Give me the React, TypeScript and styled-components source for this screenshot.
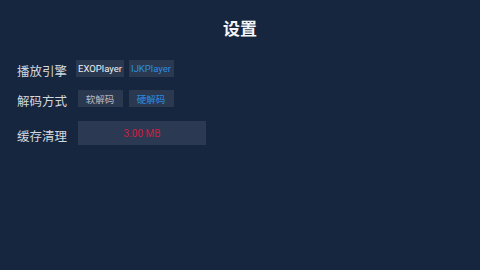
import styled, { createGlobalStyle } from "styled-components";

const Global = createGlobalStyle`
    html, body { margin: 0; padding: 0; background: #17263f; }
    body { font-family: "Roboto", "Noto Sans CJK SC", sans-serif; }
`;

const Page = styled.div`
    width: 480px;
    height: 270px;
    background: #17263f;
    box-sizing: border-box;
    padding: 17px 0 0 17px;
`;

const Title = styled.h1`
    margin: 0 0 20px -17px;
    text-align: center;
    font-family: "Noto Sans CJK SC", sans-serif;
    font-size: 17px;
    font-weight: 700;
    line-height: 22px;
    color: #f2f4f7;
`;

const Row = styled.div<{ $h: number; $mb: number }>`
    display: flex;
    align-items: center;
    height: ${p => p.$h}px;
    margin-bottom: ${p => p.$mb}px;
`;

const Label = styled.div`
    width: 58px;
    font-family: "Noto Sans CJK SC", sans-serif;
    font-size: 12.5px;
    color: #d3d7de;
    padding-top: 4px;
`;

const Options = styled.div`
    display: grid;
    grid-template-columns: 50px 44px;
    column-gap: 4px;
    justify-items: center;
`;

const Option = styled.div<{ $tone: "white" | "gray" | "blue" }>`
    min-width: 45px;
    height: 17px;
    padding: 0 2px;
    box-sizing: border-box;
    display: flex;
    align-items: center;
    justify-content: center;
    background: #2a3850;
    font-size: 9.5px;
    font-family: "Roboto", "Noto Sans CJK SC", sans-serif;
    white-space: nowrap;
    color: ${p => (p.$tone === "blue" ? "#2b8fe0" : p.$tone === "white" ? "#eef0f3" : "#b9bec8")};
`;

const Cache = styled.div`
    margin-left: 3px;
    width: 128px;
    height: 24px;
    display: flex;
    align-items: center;
    justify-content: center;
    background: #2c3952;
    color: #cc1f43;
    font-size: 10px;
`;

export default function App() {
    return (
        <Page>
            <Global />
            <Title>设置</Title>
            <Row $h={18} $mb={13}>
                <Label>播放引擎</Label>
                <Options>
                    <Option $tone="white">EXOPlayer</Option>
                    <Option $tone="blue">IJKPlayer</Option>
                </Options>
            </Row>
            <Row $h={17} $mb={14}>
                <Label>解码方式</Label>
                <Options>
                    <Option $tone="gray">软解码</Option>
                    <Option $tone="blue">硬解码</Option>
                </Options>
            </Row>
            <Row $h={24} $mb={0}>
                <Label>缓存清理</Label>
                <Cache>3.00 MB</Cache>
            </Row>
        </Page>
    );
}
